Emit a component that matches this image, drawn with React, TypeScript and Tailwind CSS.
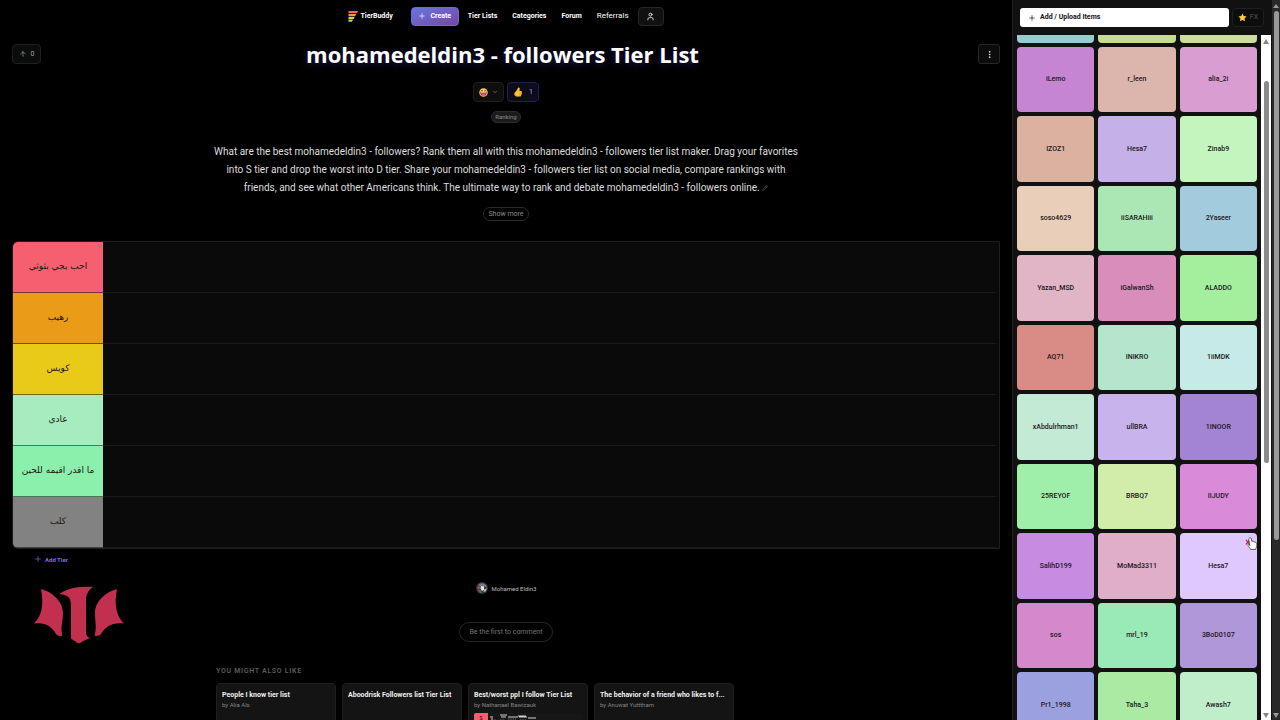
import { ArrowUp, ChevronDown, MoreVertical, Pencil, Plus, User } from "lucide-react";

const tiers = [
  { label: "احب يجي بثوثي", color: "bg-[#f55f70]" },
  { label: "رهيب", color: "bg-[#ea9c18]" },
  { label: "كويس", color: "bg-[#eaca18]" },
  { label: "عادي", color: "bg-[#a5edbf]" },
  { label: "ما اقدر اقيمه للحين", color: "bg-[#8af0ab]" },
  { label: "كلب", color: "bg-[#828282]" },
];

const items = [
  { name: "", color: "bg-[#97cdd1]" },
  { name: "", color: "bg-[#c5dd8c]" },
  { name: "", color: "bg-[#cddd9c]" },
  { name: "iLemo", color: "bg-[#c585d3]" },
  { name: "r_leen", color: "bg-[#dcb6ad]" },
  { name: "alia_2i", color: "bg-[#d99dd2]" },
  { name: "IZOZ1", color: "bg-[#dbb2a0]" },
  { name: "Hesa7", color: "bg-[#c5b0e8]" },
  { name: "Zinab9", color: "bg-[#c4f5bf]" },
  { name: "soso4629", color: "bg-[#e9ceba]" },
  { name: "iiSARAHiii", color: "bg-[#aae7b4]" },
  { name: "2Yaseer", color: "bg-[#a2cbdd]" },
  { name: "Yazan_MSD", color: "bg-[#e1b4c6]" },
  { name: "iGalwanSh", color: "bg-[#d98dbb]" },
  { name: "ALADDO", color: "bg-[#a3ef9e]" },
  { name: "AQ71", color: "bg-[#d98c86]" },
  { name: "INIKRO", color: "bg-[#b3e6cc]" },
  { name: "1iiMDK", color: "bg-[#c6ebe6]" },
  { name: "xAbdulrhman1", color: "bg-[#c2ead5]" },
  { name: "ullBRA", color: "bg-[#c9b3ec]" },
  { name: "1INOOR", color: "bg-[#a283d4]" },
  { name: "25REYOF", color: "bg-[#9feeaa]" },
  { name: "BRBQ7", color: "bg-[#d2edaa]" },
  { name: "IIJUDY", color: "bg-[#d98ad8]" },
  { name: "SalihD199", color: "bg-[#c68ce2]" },
  { name: "MoMad3311", color: "bg-[#dfafca]" },
  { name: "Hesa7", color: "bg-[#dec8fe]", hovered: true },
  { name: "sos", color: "bg-[#d588cb]" },
  { name: "mrl_19", color: "bg-[#9aeab7]" },
  { name: "3BoD0107", color: "bg-[#b097da]" },
  { name: "Pr1_1998", color: "bg-[#9aa1de]" },
  { name: "Taha_3", color: "bg-[#aaeaa3]" },
  { name: "Awash7", color: "bg-[#c0eeca]" },
];

const related = [
  { title: "People I know tier list", author: "by Alia Als", width: "w-[120px]" },
  { title: "Aboodrisk Followers list Tier List", author: "", width: "w-[120px]" },
  { title: "Best/worst ppl I follow Tier List", author: "by Nathanael Bawizauk", width: "w-[120px]", preview: true },
  { title: "The behavior of a friend who likes to f...", author: "by Anuwat Yutttham", width: "w-[140px]" },
];

const Logo = () => (
  <svg className="w-[10px] h-[11px]" viewBox="0 0 10 11" aria-hidden="true">
    <path d="M.5 0h9.500l-1 2.200H.5z" fill="#f06a62" />
    <path d="M.5 2.900h7.800l-1 2.200H.5z" fill="#eaa42b" />
    <path d="M.5 5.800h6.200l-1 2.100H.5z" fill="#e6d13b" />
    <path d="M.5 8.600h4.500l-1 2.200H.5z" fill="#8fdd7c" />
  </svg>
);

const Navbar = () => (
  <header className="h-8 flex items-center justify-center text-[7px] font-bold text-white">
    <a href="#" className="flex items-center gap-[2px] mr-[18px]">
      <Logo />
      <span>TierBuddy</span>
    </a>
    <button className="h-[19px] w-12 mr-[9px] rounded-[4px] border border-[#7168d8] bg-linear-to-br from-[#6675dd] to-[#7547a6] flex items-center justify-center gap-1">
      <Plus className="size-2" />
      Create
    </button>
    <nav className="flex items-center gap-[15px]">
      <a href="#">Tier Lists</a>
      <a href="#">Categories</a>
      <a href="#">Forum</a>
      <a href="#" className="text-[8px] font-normal">Referrals</a>
    </nav>
    <button aria-label="Account" className="ml-[9px] w-[26px] h-[19px] rounded-[4px] border border-[#262626] bg-[#111] flex items-center justify-center">
      <User className="size-[9px]" />
    </button>
  </header>
);

const GrinEmoji = () => (
  <svg className="size-[9px]" viewBox="0 0 18 18" aria-hidden="true">
    <circle cx="9" cy="9" r="8.5" fill="#fbc95a" />
    <path d="M3.500 6.500 6 4.800l2 1.700M10 6.500l2-1.700 2.500 1.700" fill="none" stroke="#4b2a1d" strokeWidth="1.300" />
    <path d="M2.500 8.500h13c0 4.500-3 7.500-6.500 7.500s-6.500-3-6.500-7.500z" fill="#8b1738" />
    <path d="M4 9h10v1.500H4z" fill="#fff" />
    <path d="M5.500 12h7v3.500q-3.500 2.500-7 0z" fill="#f2508c" />
  </svg>
);

const ThumbEmoji = () => (
  <svg className="size-[10px]" viewBox="0 0 18 18" aria-hidden="true">
    <path d="M9.500 1c2-.6 3 1 2.600 3l-.5 3h2.700c1.600 0 2.200 1.600 1.300 2.600 1 .9.700 2.200-.2 2.700.6 1-.1 2.100-.9 2.400.2 1.300-.6 2.300-2 2.300H7.500C4 17 2.500 15 2.500 12.500c0-2.600 1.600-3.700 3.300-5.500C8 4.800 8.200 2.600 9.500 1z" fill="#fbc02d" />
    <path d="M11 9.500h4.500M11 12.300h4.200M11 14.800h3.500" stroke="#d98c19" strokeWidth=".8" />
    <path d="M3 12c.5 3 2 4.300 5 4.600" stroke="#e28c1c" strokeWidth="1.200" fill="none" />
  </svg>
);

const Emblem = () => (
  <svg className="absolute left-[22px] top-[37px] w-[90px] h-[58px] pointer-events-none" viewBox="0 0 90 58" aria-hidden="true">
    <g fill="#c3304f">
      <path d="M7 3C18 6 29 15 29 27c0 10-3 14-.5 22.500-2 1-5 .5-6.500-1.500C18 41 12 36 0 37.500 8 30 10 18 7 3z" />
      <path d="M83 3C72 6 61 15 61 27c0 10 2 14-.5 22.500 2 1 5 .5 6.500-1.500C71 41 78 36 90 37.500 82 30 80 18 83 3z" />
      <path d="M25.500 8C34 2 44 .5 59 .800c-5 4-7 8-7 13v30c0 6 1 8 5 8-3 1-6 2-9 4-3 2-4 2-6 0l-5-3V20C37 12 35 9 25.500 8z" />
    </g>
  </svg>
);

const Avatar = () => (
  <svg className="size-3" viewBox="0 0 24 24" aria-hidden="true">
    <circle cx="12" cy="12" r="12" fill="#34363b" />
    <path d="M4 6q8-7 16 0l2 5-5-2-5 1-6-3z" fill="#777b83" />
    <path d="M2 10l5-2 2 4-4 4z" fill="#a84758" />
    <path d="M10 8l6 1v7l-4 2-3-5z" fill="#e8e2e2" />
    <path d="M4 16l6 1 2 5-5-1z" fill="#3e8068" />
    <path d="M17 14l5-1-3 6-4 1z" fill="#b9bbc0" />
  </svg>
);

const TierBoard = () => (
  <section className="mt-5 rounded-l-md border border-[#1e1e1e] bg-[#0a0a0a] overflow-hidden">
    {tiers.map((tier) => (
      <div key={tier.label} className="flex h-[51px] pr-[3px]">
        <div
          dir="rtl"
          className={`w-[90px] border-b border-black/50 flex items-center justify-center text-center text-[9px] font-['DejaVu_Sans',sans-serif] text-[#1c1714] ${tier.color}`}
        >
          {tier.label}
        </div>
        <div className="flex-1 border-b border-[#1b1b1b]"></div>
      </div>
    ))}
  </section>
);

const PreviewStrip = () => (
  <div className="flex h-5 rounded-[2px] overflow-hidden bg-[#171717]">
    <div className="w-[14px] bg-[#f55f70] text-[5px] leading-[10px] text-center text-black">S</div>
    <svg className="w-[52px] h-3" viewBox="0 0 52 12" aria-hidden="true">
      <path d="M2 4h3M3 6h2M12 2h7M13 4h5M20 4h10M30 3h8M31 4h8M40 5h8" stroke="#cfcfcf" strokeWidth="1.200" />
      <path d="M4 7h4M12 7h5M20 6h8M32 7h6" stroke="#666" strokeWidth="1" strokeDasharray="1.500 .8" />
    </svg>
  </div>
);

const Related = () => (
  <section className="w-[580px] max-w-full mx-auto mt-6">
    <h2 className="text-[7px] leading-[10px] font-semibold tracking-widest text-[#5d5d5d]">YOU MIGHT ALSO LIKE</h2>
    <div className="mt-[7px] flex gap-[6px]">
      {related.map((list) => (
        <a
          key={list.title}
          href="#"
          className={`h-20 shrink-0 rounded-[4px] border border-[#1f1f1f] bg-[#141414] px-[5px] pt-[6px] ${list.width}`}
        >
          <h3 className="truncate text-[7px] leading-[10px] font-bold text-[#f0f0f0]">{list.title}</h3>
          <p className="h-[13px] text-[6px] leading-[10px] text-[#858585]">{list.author}</p>
          {list.preview && <PreviewStrip />}
        </a>
      ))}
    </div>
  </section>
);

const HandCursor = () => (
  <svg className="absolute right-0 top-1 w-3 h-[13px]" viewBox="0 0 24 26" aria-hidden="true">
    <path d="m2 6 8 9m0-10-8 10" stroke="#d61f4c" strokeWidth="2.500" />
    <path
      d="M9 2c2-1 3.500 0 3.800 2l1 5c1-1 3-.8 3.400.700 1.200-.8 2.800-.2 3.200 1.200 1.600-.5 2.800.4 3 2l.2 4c0 3-2 5-2.500 8H11c-.5-3-4-5-5-8-.5-2 1.500-3 3-1.500L9.500 17 7.500 4.500C7.300 3.500 8 2.500 9 2z"
      fill="#fff"
      stroke="#333"
      strokeWidth="1.500"
    />
  </svg>
);

const Sidebar = () => (
  <aside className="w-[260px] shrink-0 h-screen flex flex-col bg-[#111] border-l border-[#202020]">
    <div className="h-[35px] shrink-0 flex items-center gap-[3px] pl-[7px] pr-2">
      <button className="flex-1 h-[19px] rounded-[3px] bg-white text-[#111] text-[7px] font-bold flex items-center gap-1 pl-2">
        <Plus className="size-2" />
        Add / Upload Items
      </button>
      <button className="w-8 h-[19px] rounded-[4px] border border-[#1f1f1f] bg-[#0d0d0d] flex items-center justify-center gap-[3px] text-[7px] text-[#555]">
        <svg className="size-[9px]" viewBox="0 0 20 20" aria-hidden="true">
          <path d="M10 1l2.800 5.900 6.400.8-4.700 4.400 1.200 6.400L10 15.400l-5.700 3.100 1.200-6.400L.8 7.700l6.400-.8z" fill="#fbc938" />
        </svg>
        FX
      </button>
    </div>
    <div className="flex-1 min-h-0 flex overflow-hidden">
      <div className="flex-1 px-1 overflow-hidden">
        <div className="grid grid-cols-3 gap-1 -mt-[58px]">
          {items.map((item, i) => (
            <div
              key={i}
              className={`relative aspect-[59/50] rounded-[4px] flex items-center justify-center text-[7px] font-medium text-[#1b1720] ${item.color}`}
            >
              {item.name}
              {item.hovered && <HandCursor />}
            </div>
          ))}
        </div>
      </div>
      <div className="w-[10px] bg-white flex flex-col items-center pt-1 pb-[2px]">
        <div className="border-x-[3px] border-x-transparent border-b-[5px] border-b-[#858585]"></div>
        <div className="h-[37px]"></div>
        <div className="w-[5px] h-[382px] rounded-full bg-[#8b8b8b]"></div>
        <div className="flex-1"></div>
        <div className="border-x-[3px] border-x-transparent border-t-[5px] border-t-[#858585]"></div>
      </div>
      <div className="w-px"></div>
    </div>
  </aside>
);

const App = () => {
  return (
    <div className="h-screen flex overflow-hidden bg-black text-white font-[Roboto,'Noto_Sans',sans-serif]">
      <main className="flex-1 min-w-0 px-3">
        <Navbar />

        <div className="mt-3 flex items-start justify-between">
          <button className="w-[29px] h-5 rounded-[4px] border border-[#1f1f1f] bg-[#0c0c0c] flex items-center justify-center gap-1 text-[7px] text-[#a5a5a5]">
            <ArrowUp className="size-2" />0
          </button>
          <h1 className="-mt-[5px] text-[22px] leading-[30px] font-bold font-['Open_Sans',sans-serif] text-shadow-[0_2px_8px_rgb(80_70_200/0.4)]">
            mohamedeldin3 - followers Tier List
          </h1>
          <button aria-label="More options" className="w-[22px] h-5 ml-[14px] rounded-[3px] border border-[#262626] bg-[#0c0c0c] flex items-center justify-center">
            <MoreVertical className="size-[9px]" />
          </button>
        </div>

        <div className="mt-[13px] flex justify-center gap-[3px]">
          <button aria-label="Add reaction" className="w-[31px] h-5 rounded-[4px] border border-[#1f1f1f] bg-[#0e0e0e] flex items-center justify-center gap-1">
            <GrinEmoji />
            <ChevronDown className="size-[6px] text-[#aaa]" />
          </button>
          <button className="w-8 h-5 rounded-[4px] border border-[#231f4b] bg-[#0d0b20] flex items-center justify-center gap-[6px] text-[7px] text-[#a9a9c8]">
            <ThumbEmoji />1
          </button>
        </div>

        <div className="mt-[9px] flex justify-center">
          <span className="rounded-full border border-[#2c2c2c] bg-[#1b1b1b] px-[3px] text-[6px] leading-[10px] text-[#8b8b8b]">Ranking</span>
        </div>

        <p className="mt-5 mx-auto max-w-[590px] text-center text-[10px] leading-[18px] text-[#dedede]">
          What are the best mohamedeldin3 - followers? Rank them all with this mohamedeldin3 - followers tier list maker. Drag your favorites into S tier and drop the worst into D tier. Share your mohamedeldin3 - followers tier list on social media, compare rankings with friends, and see what other Americans think. The ultimate way to rank and debate mohamedeldin3 - followers online.{" "}
          <Pencil className="inline size-[6px] text-[#777]" />
        </p>

        <div className="mt-[10px] flex justify-center">
          <button className="h-[14px] w-[46px] rounded-full border border-[#2a2a2a] text-[7px] leading-[10px] text-[#8b8b8b]">Show more</button>
        </div>

        <TierBoard />

        <div className="relative pt-1">
          <Emblem />
          <button className="ml-[22px] h-3 flex items-center gap-[3px] text-[6px] font-bold text-[#8069ef]">
            <Plus className="size-2" />
            Add Tier
          </button>
        </div>

        <div className="mt-[17px] flex items-center justify-center gap-1 text-[6px] text-[#bdbdbd]">
          <Avatar />
          Mohamed Eldin3
        </div>

        <div className="mt-7 flex justify-center">
          <button className="h-5 w-[94px] rounded-full border border-[#262626] text-[7px] text-[#747474]">Be the first to comment</button>
        </div>

        <Related />
      </main>

      <Sidebar />

      <div className="w-2 shrink-0 h-screen bg-[#292929] flex flex-col items-center pt-1 pb-[2px]">
        <div className="border-x-[3px] border-x-transparent border-b-[4px] border-b-[#999]"></div>
        <div className="mt-[3px] w-[5px] h-[529px] rounded-full bg-[#999]"></div>
        <div className="flex-1"></div>
        <div className="border-x-[3px] border-x-transparent border-t-[5px] border-t-[#999]"></div>
      </div>
    </div>
  );
};

export default App;
